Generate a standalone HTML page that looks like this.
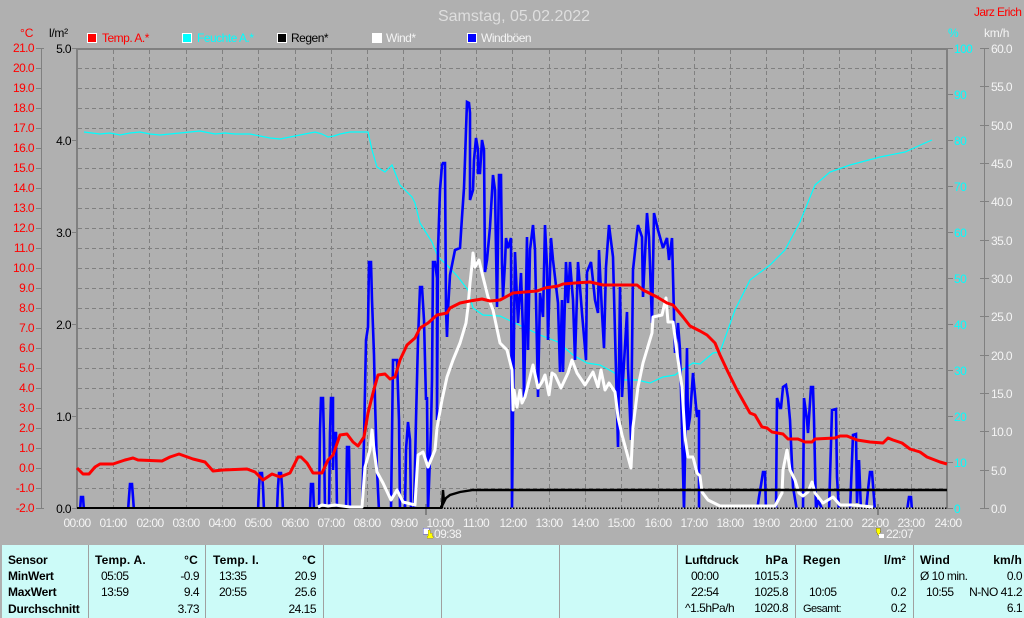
<!DOCTYPE html>
<html><head><meta charset="utf-8"><style>
html,body{margin:0;padding:0;width:1024px;height:618px;overflow:hidden;background:#b0b0b0}
svg{display:block;font-family:"Liberation Sans",sans-serif;font-size:12px}
.d{letter-spacing:-.6px}
.r{fill:#f00}.w{fill:#f4f4f4}.c{fill:#0ff}.k{fill:#000}
.e{text-anchor:end}.m{text-anchor:middle}
.b{font-weight:bold;letter-spacing:.2px}
.t{fill:#000;letter-spacing:-.5px}
.l{letter-spacing:-.5px}
</style></head><body>
<svg width="1024" height="618" viewBox="0 0 1024 618" xmlns="http://www.w3.org/2000/svg">
<defs><clipPath id="p"><rect x="77" y="48" width="871" height="459.5"/></clipPath></defs>
<rect width="1024" height="618" fill="#b0b0b0"/>
<text x="514" y="21" class="m" style="font-size:16px" fill="#dedede">Samstag, 05.02.2022</text>
<text x="974" y="16" class="r" style="letter-spacing:-.6px">Jarz Erich</text>
<!-- unit labels -->
<text x="20" y="37" class="r">°C</text>
<text x="49" y="37" class="k" style="letter-spacing:-.3px">l/m²</text>
<text x="948" y="37" class="c">%</text>
<text x="984" y="37" class="w" style="letter-spacing:-.2px">km/h</text>
<!-- legend -->
<g stroke="#fff" stroke-width="1" shape-rendering="crispEdges">
<rect x="87.5" y="33.5" width="9" height="9" fill="#f00"/>
<rect x="182.5" y="33.5" width="9" height="9" fill="#0ff"/>
<rect x="277.5" y="33.5" width="9" height="9" fill="#000"/>
<rect x="372.5" y="33.5" width="9" height="9" fill="#fff"/>
<rect x="467.5" y="33.5" width="9" height="9" fill="#00f"/>
</g>
<text x="102" y="42" class="r l">Temp. A.*</text>
<text x="197" y="42" class="c l">Feuchte A.*</text>
<text x="291" y="42" class="k l">Regen*</text>
<text x="386" y="42" class="w l">Wind*</text>
<text x="481" y="42" class="w l">Windböen</text>
<!-- grid -->
<g shape-rendering="crispEdges" fill="none" stroke="#808080">
<path stroke-dasharray="4 3" d="M78 68.5H946M78 88.5H946M78 108.5H946M78 128.5H946M78 148.5H946M78 168.5H946M78 188.5H946M78 208.5H946M78 228.5H946M78 248.5H946M78 268.5H946M78 288.5H946M78 308.5H946M78 328.5H946M78 348.5H946M78 368.5H946M78 388.5H946M78 408.5H946M78 428.5H946M78 448.5H946M78 468.5H946M78 488.5H946"/>
<path stroke-dasharray="4 3" d="M113.5 50V508M149.5 50V508M186.5 50V508M222.5 50V508M258.5 50V508M295.5 50V508M331.5 50V508M367.5 50V508M403.5 50V508M440.5 50V508M476.5 50V508M512.5 50V508M549.5 50V508M585.5 50V508M621.5 50V508M658.5 50V508M694.5 50V508M730.5 50V508M766.5 50V508M803.5 50V508M839.5 50V508M875.5 50V508M911.5 50V508"/>
<path stroke-width="2" d="M77 49H948M77 48V508M947 48V508"/>
<path d="M41.5 48V508M36 48.5H44M36 68.5H41M36 88.5H41M36 108.5H41M36 128.5H41M36 148.5H41M36 168.5H41M36 188.5H41M36 208.5H41M36 228.5H41M36 248.5H41M36 268.5H41M36 288.5H41M36 308.5H41M36 328.5H41M36 348.5H41M36 368.5H41M36 388.5H41M36 408.5H41M36 428.5H41M36 448.5H41M36 468.5H41M36 488.5H41M36 508.5H44"/>
<path d="M984.5 48V508M980 48.5H989M980 86.5H989M980 125.5H989M980 163.5H989M980 201.5H989M980 240.5H989M980 278.5H989M980 316.5H989M980 355.5H989M980 393.5H989M980 431.5H989M980 470.5H989M980 508.5H989"/>
<path d="M72 48.5H77M72 140.5H77M72 232.5H77M72 324.5H77M72 416.5H77M72 508.5H77"/>
<path d="M947 48.5H953M947 94.5H953M947 140.5H953M947 186.5H953M947 232.5H953M947 278.5H953M947 324.5H953M947 370.5H953M947 416.5H953M947 462.5H953M947 508.5H953"/>
<path stroke-width="2" d="M426 504V515M878 504V515"/>
</g>
<!-- left temp axis -->
<g class="r e d">
<text x="34" y="52">21.0</text><text x="34" y="72">20.0</text><text x="34" y="92">19.0</text><text x="34" y="112">18.0</text><text x="34" y="132">17.0</text><text x="34" y="152">16.0</text><text x="34" y="172">15.0</text><text x="34" y="192">14.0</text><text x="34" y="212">13.0</text><text x="34" y="232">12.0</text><text x="34" y="252">11.0</text><text x="34" y="272">10.0</text><text x="34" y="292">9.0</text><text x="34" y="312">8.0</text><text x="34" y="332">7.0</text><text x="34" y="352">6.0</text><text x="34" y="372">5.0</text><text x="34" y="392">4.0</text><text x="34" y="412">3.0</text><text x="34" y="432">2.0</text><text x="34" y="452">1.0</text><text x="34" y="472">0.0</text><text x="34" y="492">-1.0</text><text x="34" y="512">-2.0</text>
</g>
<g class="k e d">
<text x="71" y="53">5.0</text><text x="71" y="145">4.0</text><text x="71" y="237">3.0</text><text x="71" y="329">2.0</text><text x="71" y="421">1.0</text><text x="71" y="513">0.0</text>
</g>
<g class="c d">
<text x="954" y="53">100</text><text x="954" y="99">90</text><text x="954" y="145">80</text><text x="954" y="191">70</text><text x="954" y="237">60</text><text x="954" y="283">50</text><text x="954" y="329">40</text><text x="954" y="375">30</text><text x="954" y="421">20</text><text x="954" y="467">10</text><text x="954" y="513">0</text>
</g>
<g class="w d">
<text x="991" y="53">60.0</text><text x="991" y="91">55.0</text><text x="991" y="130">50.0</text><text x="991" y="168">45.0</text><text x="991" y="206">40.0</text><text x="991" y="245">35.0</text><text x="991" y="283">30.0</text><text x="991" y="321">25.0</text><text x="991" y="360">20.0</text><text x="991" y="398">15.0</text><text x="991" y="436">10.0</text><text x="991" y="475">5.0</text><text x="991" y="513">0.0</text>
</g>
<g class="w m d">
<text x="77" y="527">00:00</text><text x="113" y="527">01:00</text><text x="150" y="527">02:00</text><text x="186" y="527">03:00</text><text x="222" y="527">04:00</text><text x="258" y="527">05:00</text><text x="295" y="527">06:00</text><text x="331" y="527">07:00</text><text x="367" y="527">08:00</text><text x="404" y="527">09:00</text><text x="440" y="527">10:00</text><text x="476" y="527">11:00</text><text x="513" y="527">12:00</text><text x="549" y="527">13:00</text><text x="585" y="527">14:00</text><text x="621" y="527">15:00</text><text x="658" y="527">16:00</text><text x="694" y="527">17:00</text><text x="730" y="527">18:00</text><text x="766" y="527">19:00</text><text x="803" y="527">20:00</text><text x="839" y="527">21:00</text><text x="875" y="527">22:00</text><text x="911" y="527">23:00</text><text x="948" y="527">24:00</text>
</g>
<text x="434" y="538" class="w d">09:38</text>
<text x="886" y="538" class="w d">22:07</text>
<!-- sun markers -->
<g shape-rendering="crispEdges">
<rect x="423" y="528" width="6" height="6" fill="#fff" stroke="#5a5ad0" stroke-width=".5"/>
<path d="M428 530h2v3h2v3h1v2h-6v-2h1z" fill="#ff0" stroke="#a09000" stroke-width=".4"/>
<path d="M876 528h4v3h1l-2 4h-1l-2-4z" fill="#ff0" stroke="#706000" stroke-width=".4"/>
<rect x="879" y="534" width="5" height="4" fill="#fff"/>
</g>
<!-- humidity -->
<polyline fill="none" stroke="#0ff" stroke-width="1.2" points="84,132 92,133 100,134 110,133 120,135 130,133 140,132 150,134 160,135 170,134 180,133 190,132 200,131 215,134 225,133 235,134 250,134 260,136 270,138 280,139 290,137 300,135 315,132 322,134 328,137 334,136 340,134 350,132 368,132 372,150 377,167 385,172 392,165 400,185 412,197 415,203 420,223 432,242 438,257 447,265 458,277 468,290 473,308 483,315 500,316 517,324 540,335 558,342 573,355 587,363 600,365 613,372 625,380 637,380 650,383 663,377 675,375 682,370 693,363 700,364 713,353 720,352 735,310 750,280 770,265 785,250 800,222 815,185 830,172 850,165 880,157 905,152 925,143 932,140"/>
<!-- gusts -->
<g clip-path="url(#p)">
<polyline fill="none" stroke="#00f" stroke-width="2.6" stroke-linejoin="miter" stroke-miterlimit="2" points="80,511 81,497 83,497 84,511 128,511 129,497 130,484 132,484 133,497 134,511 258,511 259,487 260,473 262,473 263,487 264,511 277,511 278,487 279,473 281,473 282,487 283,511 310,511 311,484 313,484 314,511 319,511 320,430 321,398 323,398 324,440 325,511 329,511 330,433 331,398 333,398 333,470 334,433 336,433 337,511 346,511 347,447 349,447 350,511 362,511 364,440 366,340 368,327 369,262 371,262 372,300 374,355 375,400 377,470 379,511 391,511 393,360 397,360 399,420 400,511 405,511 406,450 408,422 410,440 411,511 414,511 416,420 418,340 420,287 422,287 424,320 426,400 427,397 428,511 431,430 432,380 433,262 435,262 437,278 437,420 438,250 440,190 442,165 443,163 445,163 446,310 447,337 448,310 450,275 452,265 455,250 460,248 462,217 464,188 465,160 466,130 467,102 469,103 470,113 470,200 473,190 474,160 476,138 478,150 478,173 480,173 482,140 484,150 485,272 487,260 490,227 493,175 495,190 497,307 499,175 501,175 502,263 503,297 505,263 506,238 508,248 511,238 512,511 513,413 515,252 517,300 518,323 521,273 523,333 524,400 527,237 528,350 530,250 533,225 535,250 538,397 540,293 543,317 545,225 547,267 548,340 551,238 553,260 558,303 560,372 562,300 563,372 566,262 568,303 570,262 573,300 575,360 578,262 582,313 586,360 587,272 591,262 595,300 598,313 599,250 602,313 604,348 606,267 609,225 613,257 618,447 620,287 622,397 627,312 628,367 631,440 633,270 637,233 638,225 642,237 643,297 647,213 649,237 652,323 654,213 658,230 663,248 667,238 669,260 672,238 675,353 678,323 680,350 684,511 687,348 688,430 690,417 693,373 697,417 699,410 699,511 757,511 759,497 761,485 763,472 765,472 766,511 776,511 777,398 780,408 781,408 783,387 786,385 788,398 790,420 793,487 797,511 803,511 804,398 807,420 808,433 811,387 813,387 814,420 816,511 818,500 823,511 829,511 832,410 836,409 837,477 839,511 850,511 853,435 856,434 857,503 859,460 861,511 866,511 868,490 870,472 872,472 875,511 907,511 909,497 911,497 912,511"/>
</g>
<!-- rain baseline -->
<path d="M77 508H441" stroke="#000" stroke-width="2" fill="none" shape-rendering="crispEdges"/>
<path d="M441 508H947" stroke="#000" stroke-width="1.5" stroke-dasharray="1.5 1.5" fill="none" shape-rendering="crispEdges"/>
<!-- wind -->
<polyline fill="none" stroke="#fff" stroke-width="3" stroke-linejoin="round" points="318,507 322,505 328,506 335,505 350,507 362,507 365,467 370,450 372,430 374,450 377,472 383,483 391,500 397,490 403,502 415,505 418,455 423,452 428,467 435,450 437,428 442,400 447,377 453,360 460,343 466,323 468,307 470,283 472,265 473,253 475,267 479,260 483,277 488,297 493,310 500,343 507,350 512,370 513,410 514,390 517,407 520,390 522,403 525,397 533,365 538,388 542,382 545,375 549,395 552,373 555,375 561,388 568,373 572,360 577,373 585,385 593,372 598,387 601,370 605,390 609,383 615,392 618,417 622,435 628,457 631,468 633,427 638,387 643,363 652,333 653,317 662,315 666,298 668,322 673,322 677,353 682,387 685,437 688,457 693,457 697,473 700,476 702,492 708,500 720,506 775,506 782,493 783,470 787,450 790,470 795,480 799,493 803,496 808,492 812,482 815,493 823,503 833,497 840,505 853,505 873,507"/>
<!-- rain -->
<polyline fill="none" stroke="#000" stroke-width="2.4" points="440,507 442,507 443,490 444,502 446,498 450,495 460,492 473,490 947,490"/>
<!-- temp -->
<polyline fill="none" stroke="#f00" stroke-width="3" stroke-linejoin="round" points="77,468 83,474 89,474 95,467 100,464 113,464 125,460 133,458 138,460 162,461 170,457 179,454 193,459 205,462 213,471 223,470 247,469 255,472 263,480 272,474 280,477 290,473 298,457 301,457 307,463 313,473 322,473 328,460 333,455 340,435 347,434 353,442 358,446 364,437 368,413 373,393 378,375 385,374 390,379 395,377 400,360 407,345 415,338 420,328 428,323 437,315 447,313 450,308 460,303 470,301 482,299 490,301 500,300 513,293 537,291 545,288 558,286 563,284 575,283 590,282 603,285 637,285 643,290 657,297 667,303 673,305 683,317 690,326 700,331 707,335 715,343 720,355 728,372 737,390 750,413 755,415 762,427 767,428 772,432 783,434 788,439 798,439 805,442 812,442 815,439 835,438 840,436 847,436 857,440 870,442 883,443 888,438 893,440 902,443 910,449 920,452 927,457 940,462 947,464"/>
<!-- table -->
<rect x="2" y="545" width="1022" height="73" fill="#ccfbf8" shape-rendering="crispEdges"/>
<path d="M88.5 545V618M205.5 545V618M323.5 545V618M441.5 545V618M559.5 545V618M677.5 545V618M795.5 545V618M913.5 545V618" stroke="#a0a0a0" stroke-width="1" shape-rendering="crispEdges"/>
<g class="k b">
<g style="letter-spacing:-.2px"><text x="8" y="564">Sensor</text><text x="8" y="580">MinWert</text><text x="8" y="596">MaxWert</text><text x="8" y="613">Durchschnitt</text></g>
<text x="95" y="564">Temp. A.</text><text x="198" y="564" class="e">°C</text>
<text x="213" y="564">Temp. I.</text><text x="316" y="564" class="e">°C</text>
<g style="letter-spacing:-.2px"><text x="685" y="564">Luftdruck</text></g><text x="788" y="564" class="e">hPa</text>
<text x="803" y="564">Regen</text><text x="906" y="564" class="e">l/m²</text>
<text x="920" y="564">Wind</text><text x="1022" y="564" class="e">km/h</text>
</g>
<g class="t">
<text x="101" y="580">05:05</text><text x="199" y="580" class="e">-0.9</text>
<text x="101" y="596">13:59</text><text x="199" y="596" class="e">9.4</text>
<text x="199" y="613" class="e">3.73</text>
<text x="219" y="580">13:35</text><text x="316" y="580" class="e">20.9</text>
<text x="219" y="596">20:55</text><text x="316" y="596" class="e">25.6</text>
<text x="316" y="613" class="e">24.15</text>
<text x="691" y="580">00:00</text><text x="788" y="580" class="e">1015.3</text>
<text x="691" y="596">22:54</text><text x="788" y="596" class="e">1025.8</text>
<text x="685" y="612">^1.5hPa/h</text><text x="788" y="612" class="e">1020.8</text>
<text x="809" y="596">10:05</text><text x="906" y="596" class="e">0.2</text>
<text x="803" y="612" style="font-size:11px">Gesamt:</text><text x="906" y="612" class="e">0.2</text>
<text x="920" y="580">Ø 10 min.</text><text x="1022" y="580" class="e">0.0</text>
<text x="926" y="596">10:55</text><text x="1022" y="596" class="e">N-NO 41.2</text>
<text x="1022" y="612" class="e">6.1</text>
</g>
</svg>
</body></html>
